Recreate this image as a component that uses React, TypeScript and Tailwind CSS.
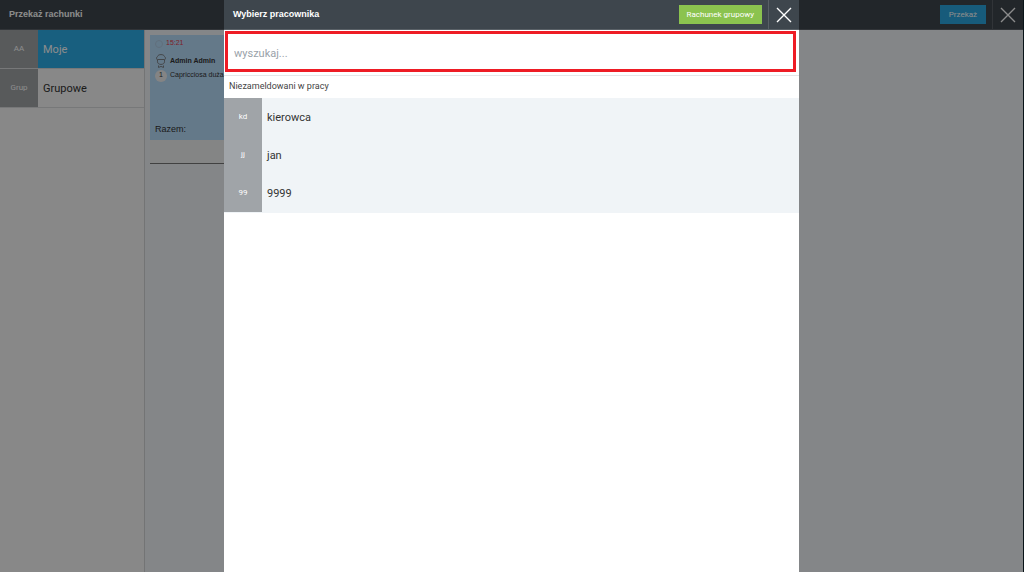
import { useState } from "react";

interface Entry {
	code: string;
	name: string;
}

const GROUPS: Entry[] = [
	{ code: "AA", name: "Moje" },
	{ code: "Grup", name: "Grupowe" },
];

const EMPLOYEES: Entry[] = [
	{ code: "kd", name: "kierowca" },
	{ code: "jj", name: "jan" },
	{ code: "99", name: "9999" },
];

const CloseIcon = () => (
	<svg viewBox="0 0 16 16" className="w-4 h-4" fill="none" stroke="currentColor" strokeWidth="1.4">
		<path d="M1 1l14 14M15 1L1 15" />
	</svg>
);

const WaiterIcon = () => (
	<svg viewBox="0 0 12 14" className="w-3 h-3.5 text-[#7d8287]" fill="none" stroke="currentColor">
		<path d="M2.500 6C1.200 5.500 1.300 3 2.500 2.500 3 1 4.500.6 6 .6s3 .4 3.500 1.900c1.200.5 1.300 3 0 3.500" />
		<path d="M2.500 5.500h7v2.300c0 3.500-7 3.500-7 0z" />
		<path d="M3.500 11.500v2L6 12.400l2.500 1.100v-2" />
	</svg>
);

const App = () => {
	const [active, setActive] = useState("AA");
	const [query, setQuery] = useState("");

	const found = EMPLOYEES.filter((item) =>
		item.name.toLowerCase().includes(query.toLowerCase())
	);

	return (
		<div className="relative min-h-screen flex flex-col bg-[#f0f4f7] border-r border-[#0a1418] font-['Roboto',sans-serif] text-[#333]">
			{/* HEADER */}
			<header className="h-[30px] shrink-0 flex items-center bg-[#3e464d] border-b border-[#596066] text-white">
				<h1 className="flex-1 pl-[9px] font-['Liberation_Sans',sans-serif] text-[9px] font-bold">
					Przekaż rachunki
				</h1>
				<button className="h-[19px] px-[9px] mr-1.5 bg-[#2ba6e0] text-[8px]">Przekaż</button>
				<button
					aria-label="Zamknij"
					className="w-[31px] h-full flex items-center justify-center border-l border-[#596066]"
				>
					<CloseIcon />
				</button>
			</header>

			<div className="flex-1 flex">
				{/* GROUPS */}
				<aside className="w-[145px] shrink-0 bg-[#f7f7f7] border-r border-[#d2d4d6]">
					{GROUPS.map((item) => (
						<button
							key={item.code}
							onClick={() => setActive(item.code)}
							className={`w-full h-[39px] flex items-center text-left border-b border-[#d9dbdd] ${
								active === item.code ? "bg-[#2caee8] text-white" : "text-[#333]"
							}`}
						>
							<span className="w-[38px] h-full flex items-center justify-center bg-[#a0a4a7] text-[8px] text-white">
								{item.code}
							</span>
							<span className="pl-[5px] pt-0.5 text-[11px]">{item.name}</span>
						</button>
					))}
				</aside>

				{/* BILLS */}
				<main className="pl-[5px] pt-[5px] font-['Liberation_Sans',sans-serif]">
					<article className="w-40 border-b border-[#777] bg-[#f0f2f3]">
						<div className="h-[105px] flex flex-col px-[5px] pt-1 pb-1 bg-[#b7dcfa]">
							<div className="h-[9px] flex items-center gap-[3px] text-[7px] text-[#e23b4b]">
								<span className="w-2 h-2 rounded-full border border-[#b0cbe2]" />
								15:21
							</div>
							<div className="mt-[5px] h-4 flex items-center gap-[3px] text-[7px] font-bold">
								<WaiterIcon />
								Admin Admin
							</div>
							<div className="h-[13px] flex items-center gap-[3px] text-[7px]">
								<span className="w-3 h-3 flex items-center justify-center rounded-full bg-[#f0f0f0]">
									1
								</span>
								Capricciosa duża...
							</div>
							<div className="mt-auto text-[9px]">Razem:</div>
						</div>
						<div className="h-[23px]" />
					</article>
				</main>
			</div>

			{/* MODAL */}
			<div className="absolute inset-0 flex justify-center bg-black/45">
				<section
					role="dialog"
					aria-labelledby="picker-title"
					className="w-[575px] max-w-full flex flex-col bg-white"
				>
					<header className="h-[30px] shrink-0 flex items-center bg-[#3e464d] border-b border-[#596066] text-white">
						<h2
							id="picker-title"
							className="flex-1 pl-[9px] font-['Liberation_Sans',sans-serif] text-[9px] font-bold"
						>
							Wybierz pracownika
						</h2>
						<button className="h-[19px] px-2 mr-1.5 bg-[#8bc34f] text-[8px]">
							Rachunek grupowy
						</button>
						<button
							aria-label="Zamknij"
							className="w-[31px] h-full flex items-center justify-center border-l border-[#596066]"
						>
							<CloseIcon />
						</button>
					</header>

					<div className="h-[46px] pl-px pr-[3px] pt-px pb-[3px] border-b border-[#e4e6e8]">
						<input
							type="text"
							aria-label="wyszukaj"
							placeholder="wyszukaj..."
							value={query}
							onChange={(e) => setQuery(e.target.value)}
							className="w-full h-full px-1.5 pt-1 border-3 border-[#ee1c25] text-[11px] placeholder:text-[#9aa2a9] outline-none"
						/>
					</div>

					<h3 className="h-[22px] pl-[5px] flex items-center text-[9px] text-[#444]">
						Niezameldowani w pracy
					</h3>

					<ul className="pb-px bg-[#f0f4f7]">
						{found.map((item) => (
							<li key={item.code}>
								<button className="w-full h-[38px] flex items-center text-left">
									<span className="w-[38px] h-full flex items-center justify-center bg-[#a0a4a8] text-[8px] text-white">
										{item.code}
									</span>
									<span className="pl-[5px] pt-0.5 text-[11px]">{item.name}</span>
								</button>
							</li>
						))}
					</ul>
				</section>
			</div>
		</div>
	);
};

export default App;
